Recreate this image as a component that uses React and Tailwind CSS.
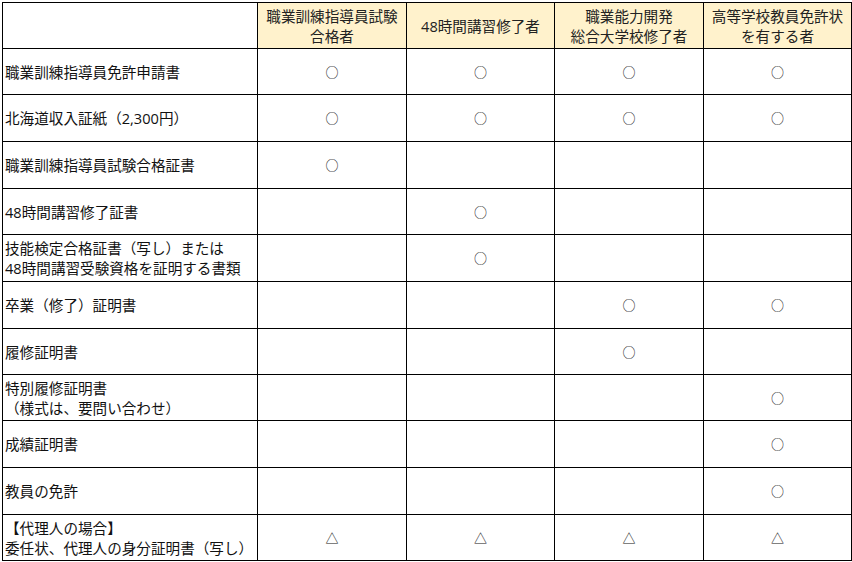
import React from "react";

const heads = [
  ["職業訓練指導員試験", "合格者"],
  ["48時間講習修了者"],
  ["職業能力開発", "総合大学校修了者"],
  ["高等学校教員免許状", "を有する者"],
];

// each row: label lines + marks for the four columns
const rows = [
  [["職業訓練指導員免許申請書"], "○", "○", "○", "○"],
  [["北海道収入証紙（2,300円）"], "○", "○", "○", "○"],
  [["職業訓練指導員試験合格証書"], "○", "", "", ""],
  [["48時間講習修了証書"], "", "○", "", ""],
  [["技能検定合格証書（写し）または", "48時間講習受験資格を証明する書類"], "", "○", "", ""],
  [["卒業（修了）証明書"], "", "", "○", "○"],
  [["履修証明書"], "", "", "○", ""],
  [["特別履修証明書", "（様式は、要問い合わせ）"], "", "", "", "○"],
  [["成績証明書"], "", "", "", "○"],
  [["教員の免許"], "", "", "", "○"],
  [["【代理人の場合】", "委任状、代理人の身分証明書（写し）"], "△", "△", "△", "△"],
];

const cell = "border-r border-b border-black flex flex-col justify-center";

export default function App() {
  return (
    <div className="w-[852px] h-[562px] bg-white pl-[2px] pt-[2px]" style={{ fontFamily: '"Open Sans", "Noto Sans CJK JP", sans-serif' }}>
      <div className="grid w-[850px] grid-cols-[255px_149px_148px_149px_148px] grid-rows-[46px_46px_47px_47px_46px_47px_47px_46px_46px_47px_47px_46px] border-l border-t border-black text-[14.6px] leading-[20px] text-[#111]">
        <div className={cell} />
        {heads.map((h, i) => (
          <div key={i} className={`${cell} items-center text-center bg-[#fff2cc] text-[#222]`}>
            {h.map((l) => <span key={l}>{l}</span>)}
          </div>
        ))}
        {rows.map(([label, ...marks], r) => (
          <React.Fragment key={r}>
            <div className={`${cell} pl-[2px]`}>
              {label.map((l) => <span key={l} className="whitespace-nowrap">{l}</span>)}
            </div>
            {marks.map((m, i) => (
              <div key={i} className={`${cell} items-center font-['Noto_Sans_CJK_JP'] text-[13px]`}>{m}</div>
            ))}
          </React.Fragment>
        ))}
      </div>
    </div>
  );
}
